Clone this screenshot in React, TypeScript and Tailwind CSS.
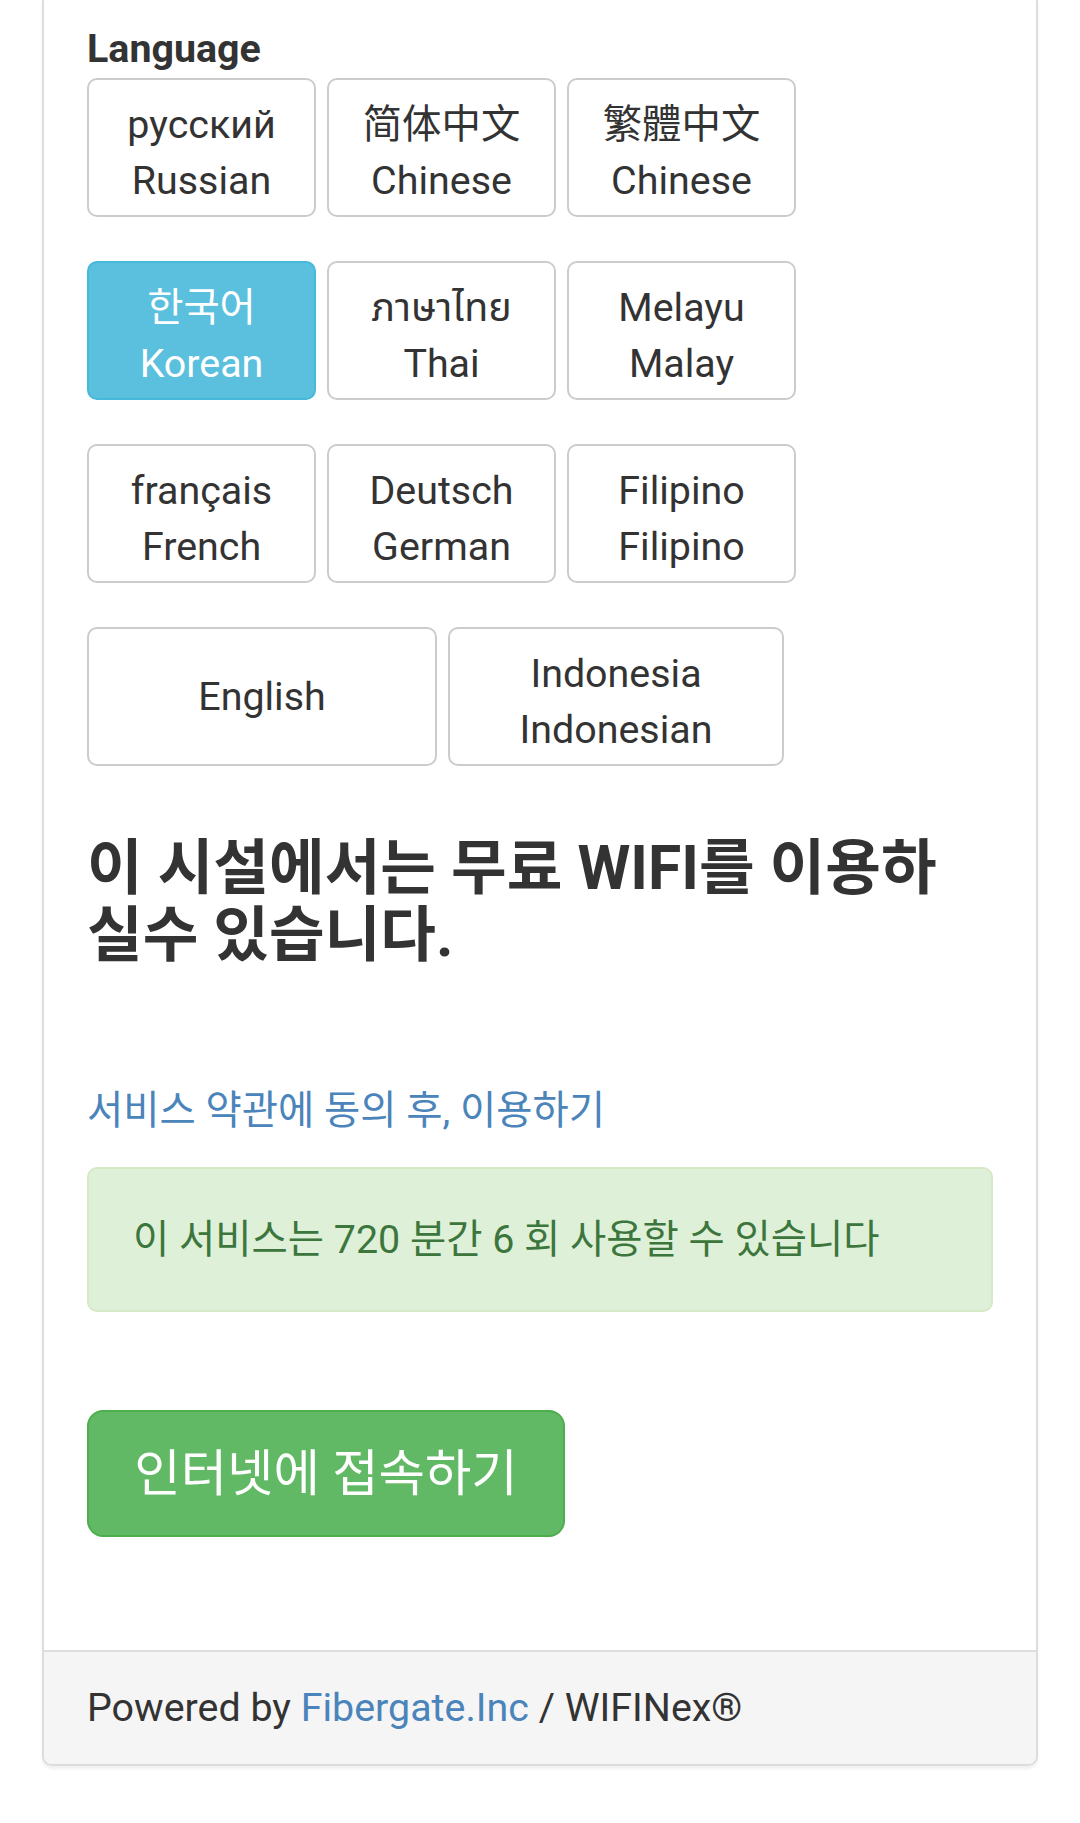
import React from "react";

type Lang = { a: string; b?: string; w: string; active?: boolean; font?: string };

const rows: Lang[][] = [
  [
    { a: "русский", b: "Russian", w: "w-[229px]" },
    { a: "简体中文", b: "Chinese", w: "w-[229px]", font: "font-['Roboto','Noto_Sans_CJK_SC',sans-serif]" },
    { a: "繁體中文", b: "Chinese", w: "w-[229px]", font: "font-['Roboto','Noto_Sans_CJK_TC',sans-serif]" },
  ],
  [
    { a: "한국어", b: "Korean", w: "w-[229px]", active: true },
    { a: "ภาษาไทย", b: "Thai", w: "w-[229px]" },
    { a: "Melayu", b: "Malay", w: "w-[229px]" },
  ],
  [
    { a: "français", b: "French", w: "w-[229px]" },
    { a: "Deutsch", b: "German", w: "w-[229px]" },
    { a: "Filipino", b: "Filipino", w: "w-[229px]" },
  ],
  [
    { a: "English", w: "w-[350px]" },
    { a: "Indonesia", b: "Indonesian", w: "w-[336px]" },
  ],
];

function LangButton({ l }: { l: Lang }) {
  const base = l.active
    ? "bg-[#5bc0de] border-[#46b8da] text-white"
    : "bg-white border-[#cccccc] text-[#333333]";
  return (
    <div
      className={`${l.w} h-[139px] border-2 rounded-[10px] flex flex-col items-center justify-center text-[39.4px] ${
        l.b ? "pt-[10px]" : ""
      } ${base}`}
    >
      <div className={`h-[56px] leading-[56px] whitespace-nowrap ${l.font ?? ""}`}>{l.a}</div>
      {l.b && <div className="h-[56px] leading-[56px] whitespace-nowrap">{l.b}</div>}
    </div>
  );
}

export default function App() {
  return (
    <div className="w-[1080px] h-[1823px] bg-white overflow-hidden font-['Roboto','Noto_Sans_CJK_KR','Noto_Sans_Thai',sans-serif] text-[#333333]">
      <div className="ml-[42px] w-[996px] bg-white border-x-2 border-b-2 border-[#dddddd] rounded-b-[10px] shadow-[0_3px_3px_rgba(0,0,0,0.06)]">
        <div className="pt-[23px] px-[43px] pb-[113px]">
          <div className="h-[52px] leading-[52px] text-[39.4px] font-bold mb-[3px]">Language</div>
          <div className="flex flex-col gap-[44px]">
            {rows.map((r, i) => (
              <div key={i} className="flex gap-[11px]">
                {r.map((l, j) => (
                  <LangButton key={j} l={l} />
                ))}
              </div>
            ))}
          </div>

          <div className="mt-[69px] text-[60.5px] font-bold text-[#333333]">
            <div className="h-[67px] leading-[67px] whitespace-nowrap">이 시설에서는 무료 WIFI를 이용하</div>
            <div className="h-[67px] leading-[67px] whitespace-nowrap">실수 있습니다.</div>
          </div>

          <div className="mt-[114px] h-[56px] leading-[56px] text-[39.4px] text-[#4a84ba] whitespace-nowrap">
            서비스 약관에 동의 후, 이용하기
          </div>

          <div className="mt-[28px] h-[145px] border-2 border-[#d6e9c6] bg-[#dff0d8] rounded-[10px] px-[44px] flex items-center">
            <div className="h-[56px] leading-[56px] text-[39.4px] text-[#3c763d] whitespace-nowrap">
              이 서비스는 720 분간 6 회 사용할 수 있습니다
            </div>
          </div>

          <div className="mt-[98px] w-[478px] h-[127px] border-2 border-[#4cae4c] bg-[#62b965] rounded-[16px] flex items-center justify-center">
            <div className="h-[66px] leading-[66px] text-[50.4px] text-white whitespace-nowrap">인터넷에 접속하기</div>
          </div>
        </div>

        <div className="border-t-2 border-[#dddddd] bg-[#f5f5f5] rounded-b-[8px] px-[43px] py-[30px]">
          <div className="h-[52px] leading-[52px] text-[39.4px] text-[#333333] whitespace-nowrap">
            Powered by <span className="text-[#4a84ba]">Fibergate.Inc</span> / WIFINex®
          </div>
        </div>
      </div>
    </div>
  );
}
